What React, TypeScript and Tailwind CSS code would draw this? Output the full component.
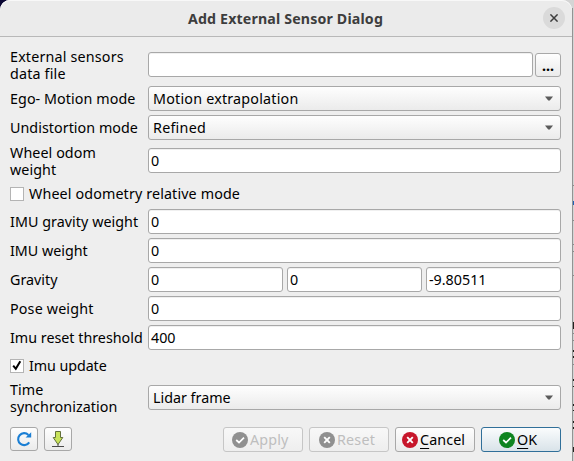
import type { ReactNode } from "react";

const box = "h-[25px] rounded-[3px] border border-[#a8a8a8]";
const raised = "bg-linear-to-b from-[#fefefe] to-[#ebebeb]";

function Label({ children, className = "" }: { children: ReactNode; className?: string }) {
  return <div className={`w-[138px] shrink-0 whitespace-nowrap leading-[17px] ${className}`}>{children}</div>;
}

function Field({ value = "" }: { value?: string }) {
  return (
    <div className={`${box} flex min-w-0 flex-1 items-center bg-white pl-[2px] shadow-[inset_0_1px_0_#f0f0f0]`}>
      {value}
    </div>
  );
}

function Select({ children, className = "" }: { children: ReactNode; className?: string }) {
  return (
    <div className={`${box} ${raised} flex flex-1 items-center justify-between pr-[7px] pl-1`}>
      <span className={className}>{children}</span>
      <svg width="8" height="5" viewBox="0 0 8 5">
        <path d="M0 0.5H8L4.8 4.5H3.2Z" fill="#5b5b5b" />
      </svg>
    </div>
  );
}

function Check({ checked = false }: { checked?: boolean }) {
  return (
    <span className="mr-[5px] flex size-[14px] items-center justify-center border border-[#b4b4b4] bg-white">
      {checked && (
        <svg width="10" height="11" viewBox="0 0 10 11" fill="none">
          <path d="M1.2 5.6L3.8 8.8L8.3 1.2" stroke="#000" strokeWidth="2" />
        </svg>
      )}
    </span>
  );
}

function StatusIcon({ color, kind }: { color: string; kind: "ok" | "x" }) {
  return (
    <svg width="16" height="16" viewBox="0 0 16 16" fill="none" className="mr-[2px] shrink-0">
      <circle cx="8" cy="8" r="8" fill={color} />
      {kind === "ok" ? (
        <path d="M4.2 8L7 10.5L12 5.6" stroke="#fff" strokeWidth="1.7" />
      ) : (
        <path d="M5.2 5.2L10.8 10.8M10.8 5.2L5.2 10.8" stroke="#fff" strokeWidth="1.9" />
      )}
    </svg>
  );
}

export default function App() {
  return (
    <div className="flex h-[461px] w-[574px] overflow-hidden bg-[linear-gradient(90deg,#0b0733_50%,#d4d4d4_50%)] font-['Noto_Sans',sans-serif] text-[14.3px] leading-[17px] text-black">
      <div className="flex w-[572px] flex-col rounded-t-[10px] bg-[#eeeeee]">
        <header className="grid h-[37px] shrink-0 grid-cols-[1fr_auto_1fr] items-center rounded-t-[10px] border-b border-[#b8b8b8] bg-[#ebebeb] pr-[7px] pl-[6px] shadow-[inset_0_1px_0_#f8f8f8]">
          <span />
          <h1 className="pt-px text-[14.2px] font-bold tracking-[0.16px] text-[#3d3d3d]">Add External Sensor Dialog</h1>
          <span className="flex size-[22px] items-center justify-center justify-self-end rounded-full bg-[#dadada]">
            <svg width="8" height="8" viewBox="0 0 8 8">
              <path d="M0.4 0.4L7.6 7.6M7.6 0.4L0.4 7.6" stroke="#3d3d3d" strokeWidth="1.5" />
            </svg>
          </span>
        </header>

        <main className="flex flex-col pt-[10px] pr-[11px] pl-[10px]">
          <div className="flex h-[35px] items-center">
            <Label className="tracking-[0.18px]">External sensors<br />data file</Label>
            <Field />
            <div className={`ml-[2px] mt-px flex h-6 w-[26px] items-center justify-center rounded-[3px] border border-[#a8a8a8] font-bold ${raised}`}>...</div>
          </div>
          <div className="mt-1 flex h-[25px] items-center">
            <Label className="tracking-[0.07px]">Ego- Motion mode</Label>
            <Select className="tracking-[0.21px]">Motion extrapolation</Select>
          </div>
          <div className="mt-1 flex h-[25px] items-center">
            <Label className="tracking-[0.04px]">Undistortion mode</Label>
            <Select className="tracking-[0.25px]">Refined</Select>
          </div>
          <div className="mt-[3px] flex h-[35px] items-center">
            <Label className="tracking-[0.08px]">Wheel odom<br />weight</Label>
            <Field value="0" />
          </div>
          <div className="mt-1 flex h-[23px] items-center">
            <Check /><span className="tracking-[0.13px]">Wheel odometry relative mode</span>
          </div>
          <div className="mt-1 flex h-[25px] items-center">
            <Label className="tracking-[0.05px]">IMU gravity weight</Label>
            <Field value="0" />
          </div>
          <div className="mt-1 flex h-[25px] items-center">
            <Label>IMU weight</Label>
            <Field value="0" />
          </div>
          <div className="mt-1 flex h-[25px] items-center">
            <Label>Gravity</Label>
            <div className="flex flex-1 gap-1">
              <Field value="0" />
              <Field value="0" />
              <Field value="-9.80511" />
            </div>
          </div>
          <div className="mt-1 flex h-[25px] items-center">
            <Label className="tracking-[0.16px]">Pose weight</Label>
            <Field value="0" />
          </div>
          <div className="mt-1 flex h-[25px] items-center">
            <Label>Imu reset threshold</Label>
            <Field value="400" />
          </div>
          <div className="mt-1 flex h-[23px] items-center">
            <Check checked /><span className="tracking-[-0.08px]">Imu update</span>
          </div>
          <div className="mt-[3px] flex h-[35px] items-center">
            <Label className="tracking-[0.05px]">Time<br />synchronization</Label>
            <Select>Lidar frame</Select>
          </div>
        </main>

        <footer className="mt-3 flex h-[25px] items-start pr-[11px] pl-[10px]">
          <div className={`flex h-6 w-7 items-center justify-center rounded-[3px] border border-[#a8a8a8] ${raised}`}>
            <svg width="16" height="16" viewBox="0 0 16 16" fill="none">
              <path d="M12.4 3.9A6 6 0 1 0 13.2 11.4" stroke="#1b7fd4" strokeWidth="2.1" />
              <path d="M15.2 1.2V6.6H9.6Z" fill="#1b7fd4" />
            </svg>
          </div>
          <div className={`ml-[6px] flex h-6 w-7 items-center justify-center rounded-[3px] border border-[#a8a8a8] ${raised}`}>
            <svg width="16" height="18" viewBox="0 0 16 18" fill="none">
              <path d="M5.5 1.5H10.5V7.5H12.8L8 14.5L3.2 7.5H5.5Z" fill="#c8e35a" stroke="#62703a" />
              <path d="M8 14V16.5M2 16.5H14" stroke="#4a4a4a" />
            </svg>
          </div>
          <div className="ml-auto flex gap-[6px]">
            <button className="flex h-[25px] w-20 items-center rounded-[3px] border border-[#c6c6c6] bg-linear-to-b from-[#f8f8f8] to-[#eeeeee] pl-2 text-[#bebebe]">
              <StatusIcon color="#909090" kind="ok" /><span className="tracking-[0.15px]">Apply</span>
            </button>
            <button className="flex h-[25px] w-20 items-center rounded-[3px] border border-[#c6c6c6] bg-linear-to-b from-[#f8f8f8] to-[#eeeeee] pl-[9px] text-[#bebebe]">
              <StatusIcon color="#909090" kind="x" /><span className="tracking-[0.2px]">Reset</span>
            </button>
            <button className={`${box} ${raised} flex w-20 items-center pl-[6px]`}>
              <StatusIcon color="#c7162b" kind="x" /><span className="tracking-[0.1px]"><u className="underline-offset-[3px]">C</u>ancel</span>
            </button>
            <button className="flex h-[25px] w-20 items-center rounded-[3px] border border-[#306f99] bg-linear-to-b from-[#fafcfd] to-[#d9e3e9] pl-[17px]">
              <StatusIcon color="#0e8420" kind="ok" /><span><u className="underline-offset-[3px]">O</u>K</span>
            </button>
          </div>
        </footer>
      </div>
      {/* Edge of the window behind the dialog */}
      <svg width="2" height="461" viewBox="0 0 2 461" shapeRendering="crispEdges">
        <path d="M0 0H2V461H0Z" fill="#d4d4d4" />
        <path d="M0 8H1V461H0Z" fill="#939393" />
        <path d="M1 185h1v1h-1ZM1 220h1v1h-1ZM1 244h1v1h-1ZM1 251h1v1h-1ZM1 275h1v1h-1ZM1 333h1v1h-1ZM1 340h1v1h-1ZM1 364h1v1h-1Z" fill="#8c8c8c" />
        <path d="M1 201h1v4h-1Z" fill="#1d63b8" />
        <path d="M1 322h1v7h-1ZM1 350h1v2h-1ZM1 356h1v2h-1ZM1 379h1v2h-1ZM1 386h1v1h-1ZM1 404h1v2h-1ZM1 410h1v1h-1ZM1 421h1v2h-1ZM1 427h1v2h-1ZM1 447h1v5h-1Z" fill="#24221f" />
      </svg>
    </div>
  );
}
